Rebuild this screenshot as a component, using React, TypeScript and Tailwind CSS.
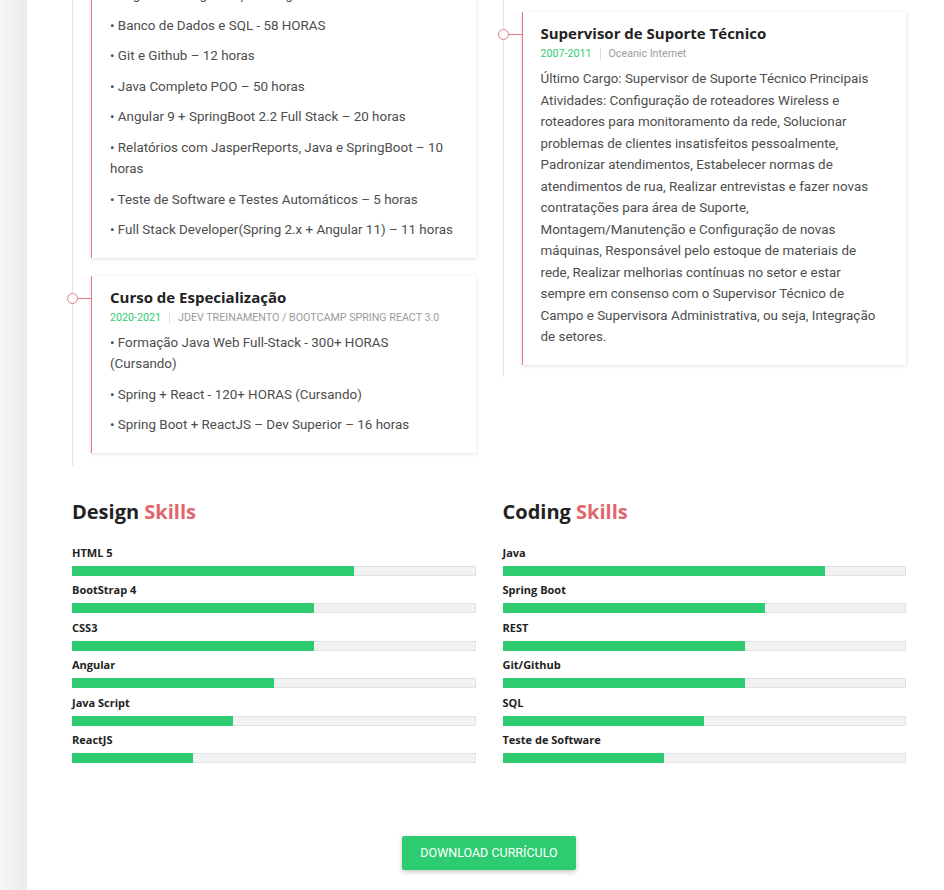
import React from 'react';

const heading = "font-['Open_Sans',sans-serif]";
const body = "font-['Roboto',sans-serif]";

const cursosTecnicos = [
  '• Lógica de Programação e Algoritmos – 40 horas',
  '• Banco de Dados e SQL - 58 HORAS',
  '• Git e Github – 12 horas',
  '• Java Completo POO – 50 horas',
  '• Angular 9 + SpringBoot 2.2 Full Stack – 20 horas',
  '• Relatórios com JasperReports, Java e SpringBoot – 10 horas',
  '• Teste de Software e Testes Automáticos – 5 horas',
  '• Full Stack Developer(Spring 2.x + Angular 11) – 11 horas',
];

const especializacao = [
  '• Formação Java Web Full-Stack - 300+ HORAS (Cursando)',
  '• Spring + React - 120+ HORAS (Cursando)',
  '• Spring Boot + ReactJS – Dev Superior – 16 horas',
];

const designSkills = [
  { name: 'HTML 5', value: 70 },
  { name: 'BootStrap 4', value: 60 },
  { name: 'CSS3', value: 60 },
  { name: 'Angular', value: 50 },
  { name: 'Java Script', value: 40 },
  { name: 'ReactJS', value: 30 },
];

const codingSkills = [
  { name: 'Java', value: 80 },
  { name: 'Spring Boot', value: 65 },
  { name: 'REST', value: 60 },
  { name: 'Git/Github', value: 60 },
  { name: 'SQL', value: 50 },
  { name: 'Teste de Software', value: 40 },
];

type CardProps = {
  title?: string;
  period?: string;
  place?: string;
  className?: string;
  children: React.ReactNode;
};

const TimelineCard: React.FC<CardProps> = ({ title, period, place, className = '', children }) => (
  <div
    className={`relative bg-white border-l border-[#e27c80] shadow-[0_1px_4px_rgba(0,0,0,0.13)] pl-[18px] pr-[20px] pt-[11px] pb-[17px] ${className}`}
  >
    {title && (
      <>
        {/* marker on the timeline */}
        <span className="absolute left-[-25px] top-[17px] w-[11px] h-[11px] rounded-full border border-[#e27c80] bg-white" />
        <span className="absolute left-[-14px] top-[22px] w-[14px] h-px bg-[#e27c80]" />
        <h3 className={`${heading} text-[15px] leading-[20px] font-bold text-[#222]`}>{title}</h3>
        <div className={`${body} mt-[3px] flex items-center text-[10.7px] leading-[16px]`}>
          <span className="text-[#2ecc71]">{period}</span>
          <span className="mx-[8px] w-px h-[12px] bg-[#dedede]" />
          <span className="text-[#9b9b9b]">{place}</span>
        </div>
      </>
    )}
    <div className={`${body} ${title ? 'mt-[6px]' : ''} text-[13.4px] leading-[21.5px] text-[#4d4d4d]`}>{children}</div>
  </div>
);

const SkillBars: React.FC<{ label: string; skills: { name: string; value: number }[] }> = ({ label, skills }) => (
  <div>
    <h2 className={`${heading} text-[20px] leading-[24px] font-bold text-[#222] mb-[22px]`}>
      {label} <span className="text-[#e0676c]">Skills</span>
    </h2>
    {skills.map(s => (
      <div key={s.name} className="mb-[7.6px]">
        <div className={`${heading} text-[11px] leading-[14px] font-bold text-[#222]`}>{s.name}</div>
        <div className="mt-[6px] h-[10px] bg-[#f2f2f2] shadow-[inset_0_0_0_1px_#e2e2e2]">
          <div className="h-full bg-[#2ecc71]" style={{ width: `${s.value}%` }} />
        </div>
      </div>
    ))}
  </div>
);

export default function App() {
  return (
    <div className="flex min-h-[890px] w-full overflow-hidden">
      <div className="w-[27px] shrink-0 bg-gradient-to-r from-[#f7f7f7] to-[#ebebeb]" />
      <div className="flex-1 bg-white pl-[45px] pr-[38px] pb-[20px]">
        <div className="grid grid-cols-2 gap-x-[27px] items-start">
          <div className="border-l border-[#e6e6e6] pl-[18px] pb-[13px]">
            <TimelineCard className="mt-[-27px] pt-0">
              {cursosTecnicos.map((c, i) => (
                <p key={i} className={i < cursosTecnicos.length - 1 ? 'mb-[9px]' : ''}>
                  {c}
                </p>
              ))}
            </TimelineCard>
            <TimelineCard
              className="mt-[18px]"
              title="Curso de Especialização"
              period="2020-2021"
              place="JDEV TREINAMENTO / BOOTCAMP SPRING REACT 3.0"
            >
              {especializacao.map((c, i) => (
                <p key={i} className={i < especializacao.length - 1 ? 'mb-[9px]' : ''}>
                  {c}
                </p>
              ))}
            </TimelineCard>
          </div>
          <div className="border-l border-[#e6e6e6] pl-[18px] pt-[12px] pb-[12px]">
            <TimelineCard title="Supervisor de Suporte Técnico" period="2007-2011" place="Oceanic Internet">
              <p>
                Último Cargo: Supervisor de Suporte Técnico Principais Atividades: Configuração de roteadores Wireless e
                roteadores para monitoramento da rede, Solucionar problemas de clientes insatisfeitos pessoalmente,
                Padronizar atendimentos, Estabelecer normas de atendimentos de rua, Realizar entrevistas e fazer novas
                contratações para área de Suporte, Montagem/Manutenção e Configuração de novas máquinas, Responsável pelo
                estoque de materiais de rede, Realizar melhorias contínuas no setor e estar sempre em consenso com o
                Supervisor Técnico de Campo e Supervisora Administrativa, ou seja, Integração de setores.
              </p>
            </TimelineCard>
          </div>
        </div>

        <div className="grid grid-cols-2 gap-x-[27px] mt-[34px]">
          <SkillBars label="Design" skills={designSkills} />
          <SkillBars label="Coding" skills={codingSkills} />
        </div>

        <div className="flex justify-center mt-[65px]">
          <button
            className={`${body} h-[34px] px-[18px] bg-[#2ecc71] text-white text-[12.5px] uppercase rounded-[2px] shadow-[0_2px_5px_rgba(0,0,0,0.22)]`}
          >
            Download Currículo
          </button>
        </div>
      </div>
    </div>
  );
}
